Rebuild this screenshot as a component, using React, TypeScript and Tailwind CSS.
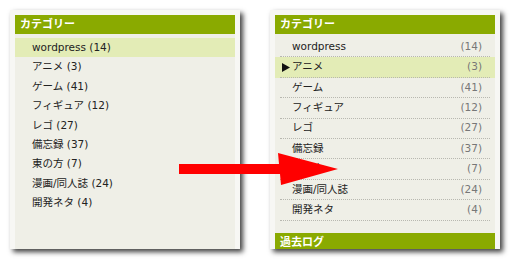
const CATEGORIES = [
  { name: "wordpress", count: 14 },
  { name: "アニメ", count: 3 },
  { name: "ゲーム", count: 41 },
  { name: "フィギュア", count: 12 },
  { name: "レゴ", count: 27 },
  { name: "備忘録", count: 37 },
  { name: "東の方", count: 7 },
  { name: "漫画/同人誌", count: 24 },
  { name: "開発ネタ", count: 4 },
];

const FONT = { fontFamily: '"DejaVu Sans", "Noto Sans CJK JP", sans-serif' };

function Header({ label }: { label: string }) {
  return (
    <div className="h-[19px] bg-[#8aaa00] pl-[5px] text-[11px] font-bold leading-[19px] text-white">
      {label}
    </div>
  );
}

// Before: plain list, counts inline
function OldWidget() {
  return (
    <div className="h-[239px] w-[230px] overflow-hidden bg-[#f7f7f4] px-[5px] pt-[5px] shadow-[3px_3px_5px_rgba(0,0,0,0.75)]">
      <div className="h-full bg-[#efefe7]">
        <Header label="カテゴリー" />
        <ul className="mt-[4px]">
          {CATEGORIES.map((c, i) => (
            <li
              key={c.name}
              className={`h-[19.4px] pl-[17px] text-[10.5px] leading-[19.4px] text-[#222] ${
                i === 0 ? "bg-[#e3ecb6]" : ""
              }`}
            >
              {c.name} ({c.count})
            </li>
          ))}
        </ul>
      </div>
    </div>
  );
}

// After: counts right-aligned, dotted rules, hover marker
function NewWidget() {
  return (
    <div className="h-[239px] w-[230px] overflow-hidden bg-[#f7f7f4] px-[5px] pt-[5px] shadow-[3px_3px_5px_rgba(0,0,0,0.75)]">
      <div className="h-full bg-[#efefe7]">
        <Header label="カテゴリー" />
        <ul className="mt-[3px]">
          {CATEGORIES.map((c, i) => (
            <li key={c.name} className={i === 1 ? "bg-[#e3ecb6]" : ""}>
              <div className="relative mx-[5px] flex h-[20.4px] items-center justify-between border-b border-dotted border-[#b8b8b0] pl-[12px] pr-[8px] text-[10.5px] text-[#222]">
                {i === 1 && (
                  <svg
                    className="absolute left-[2px] top-[6px]"
                    width="8"
                    height="9"
                    viewBox="0 0 8 9"
                  >
                    <polygon points="0,0 8,4.5 0,9" fill="#111" />
                  </svg>
                )}
                <span>{c.name}</span>
                <span className="text-[#777]">({c.count})</span>
              </div>
            </li>
          ))}
        </ul>
        <div className="mt-[12px]">
          <Header label="過去ログ" />
        </div>
      </div>
    </div>
  );
}

export default function App() {
  return (
    <div className="relative h-[260px] w-[520px] overflow-hidden bg-white" style={FONT}>
      <div className="flex gap-[30px] pl-[10px] pt-[10px]">
        <OldWidget />
        <NewWidget />
      </div>
      <svg
        className="pointer-events-none absolute left-0 top-0"
        width="520"
        height="260"
        viewBox="0 0 520 260"
      >
        <polygon
          points="179,164 279,164 278,153 338,169 281,185 280,174 179,174"
          fill="#ff0000"
        />
      </svg>
    </div>
  );
}
